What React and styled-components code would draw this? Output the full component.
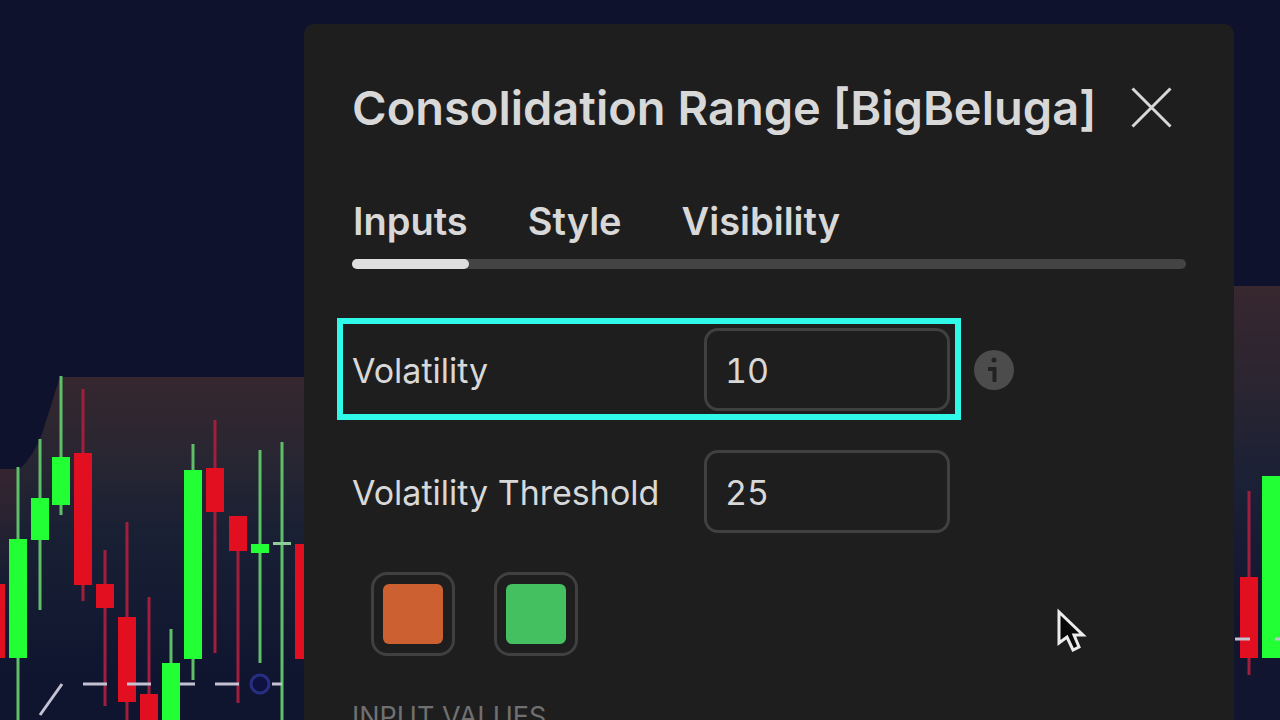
import React, { useState } from 'react'
import styled, { createGlobalStyle } from 'styled-components';


const GlobalStyle = createGlobalStyle`
    * {
        box-sizing: border-box;
    }
    body {
        margin: 0;
        background-color: #0f122d;
        font-family: Inter, "Liberation Sans", sans-serif;
    }
    button, input {
        font-family: inherit;
        color: inherit;
    }
`;

const Stage = styled.main`
    position: relative;
    height: 100vh;
    padding: 24px 46px 0 304px;
    overflow: hidden;
    color: #d8d8d8;
`;

const ChartSvg = styled.svg`
    position: absolute;
    top: 0;
    left: 0;
    width: 100%;
    height: 100%;
`;

const Dialog = styled.section`
    position: relative;
    min-height: 100%;
    padding: 48px 48px 0;
    border-radius: 10px 10px 0 0;
    background-color: #1e1e1e;
`;

const Header = styled.header`
    display: flex;
    align-items: center;
    justify-content: space-between;
    height: 72px;
    padding-right: 14px;
`;

const Title = styled.h1`
    margin: 0;
    font-size: 47px;
    font-weight: 600;
    line-height: 72px;
    white-space: nowrap;
`;

const CloseButton = styled.button`
    display: flex;
    padding: 0 0 2px;
    border: none;
    background: none;
    cursor: pointer;
`;

const Tabs = styled.div`
    position: relative;
    display: flex;
    gap: 58px;
    margin-top: 40px;
    padding-bottom: 10px;

    &::before {
        content: "";
        position: absolute;
        left: 0;
        bottom: 0;
        width: 100%;
        height: 10px;
        border-radius: 5px;
        background-color: #444444;
    }
`;

const Tab = styled.button`
    position: relative;
    height: 75px;
    padding: 0 1px 2px;
    border: none;
    background: none;
    font-size: 38px;
    font-weight: 600;
    line-height: 72px;
    cursor: pointer;

    &::after {
        content: "";
        display: ${({ $active }) => ($active ? 'block' : 'none')};
        position: absolute;
        left: 0;
        bottom: -10px;
        width: 100%;
        height: 10px;
        border-radius: 5px;
        background-color: #dedede;
    }
`;

const Form = styled.form`
    display: flex;
    flex-direction: column;
    gap: 39px;
    padding-top: 59px;
`;

const Field = styled.div`
    position: relative;
    display: flex;
    align-items: center;
    align-self: flex-start;
`;

const Label = styled.label`
    width: 352px;
    padding-top: 2px;
    font-size: 34px;
    line-height: 44px;
    white-space: nowrap;
`;

const NumberInput = styled.input`
    width: 246px;
    height: 83px;
    padding: 2px 18px 0;
    border: 3px solid #404040;
    border-radius: 14px;
    background: none;
    font-size: 34px;
    font-variant-numeric: tabular-nums;
    outline: none;
`;

const InfoButton = styled.button`
    display: flex;
    margin-left: 24px;
    padding: 0;
    border: none;
    background: none;
`;

const Highlight = styled.span`
    position: absolute;
    top: -10px;
    bottom: -9px;
    left: -15px;
    width: 624px;
    border: 6px solid #2ffaea;
    pointer-events: none;
`;

const Swatches = styled.div`
    display: flex;
    gap: 39px;
    padding-left: 19px;
`;

const Swatch = styled.button`
    width: 84px;
    height: 84px;
    padding: 9px;
    border: 3px solid #404040;
    border-radius: 16px;
    background: none;
    cursor: pointer;

    &::before {
        content: "";
        display: block;
        height: 100%;
        border-radius: 6px;
        background-color: ${({ $color }) => $color};
    }
`;

const SectionTitle = styled.h2`
    margin: 4px 0 0;
    color: #707070;
    font-size: 27px;
    font-weight: 400;
    line-height: 36px;
`;

const Pointer = styled.svg`
    position: absolute;
    top: 606px;
    left: 1054px;
`;


const GREEN = { body: '#22ff35', wick: '#5fbf68' };
const RED = { body: '#e20f20', wick: '#a01f3c' };

// x centre, wick top, wick bottom, body top, body bottom
const candles = [
    { x: -4, high: 584, low: 658, top: 584, bottom: 658, color: RED },
    { x: 18, high: 467, low: 730, top: 539, bottom: 658, color: GREEN },
    { x: 40, high: 439, low: 610, top: 498, bottom: 540, color: GREEN },
    { x: 61, high: 376, low: 515, top: 457, bottom: 505, color: GREEN },
    { x: 83, high: 389, low: 601, top: 453, bottom: 585, color: RED },
    { x: 105, high: 550, low: 706, top: 584, bottom: 608, color: RED },
    { x: 127, high: 522, low: 730, top: 617, bottom: 702, color: RED },
    { x: 149, high: 597, low: 730, top: 694, bottom: 730, color: RED },
    { x: 171, high: 629, low: 730, top: 663, bottom: 730, color: GREEN },
    { x: 193, high: 444, low: 680, top: 470, bottom: 659, color: GREEN },
    { x: 215, high: 420, low: 653, top: 468, bottom: 512, color: RED },
    { x: 238, high: 516, low: 703, top: 516, bottom: 551, color: RED },
    { x: 260, high: 450, low: 663, top: 544, bottom: 553, color: GREEN },
    { x: 282, high: 442, low: 730, top: 542, bottom: 545, color: { body: '#8fce98', wick: '#5fbf68' } },
    { x: 304, high: 544, low: 659, top: 544, bottom: 659, color: RED },
    { x: 1249, high: 491, low: 675, top: 577, bottom: 658, color: RED },
    { x: 1271, high: 476, low: 658, top: 476, bottom: 658, color: GREEN },
];

const Candle = ({ x, high, low, top, bottom, color }) => (
    <g>
        <rect x={x - 1.5} y={high} width="3" height={low - high} fill={color.wick} />
        <rect x={x - 9} y={top} width="18" height={bottom - top} fill={color.body} />
    </g>
)

const Chart = () => {
  return (
    <ChartSvg viewBox="0 0 1280 720" preserveAspectRatio="xMinYMin slice" aria-hidden="true">
        <defs>
            <linearGradient id="zone" x1="0" y1="377" x2="0" y2="690" gradientUnits="userSpaceOnUse">
                <stop offset="0" stopColor="#36272f" />
                <stop offset="0.25" stopColor="#292632" />
                <stop offset="0.5" stopColor="#192034" />
                <stop offset="1" stopColor="#0f142f" />
            </linearGradient>
            <linearGradient id="zoneRight" x1="0" y1="286" x2="0" y2="620" gradientUnits="userSpaceOnUse">
                <stop offset="0" stopColor="#38272f" />
                <stop offset="0.3" stopColor="#2a2531" />
                <stop offset="0.6" stopColor="#1a2036" />
                <stop offset="1" stopColor="#12152f" />
            </linearGradient>
            <linearGradient id="zoneEdge" x1="0" y1="0" x2="0" y2="1">
                <stop offset="0" stopColor="#38242f" stopOpacity="0.8" />
                <stop offset="1" stopColor="#38242f" stopOpacity="0" />
            </linearGradient>
        </defs>
        <path d="M0 469H20Q34 455 42 434L60 377H310V720H0Z" fill="url(#zone)" />
        <rect y="469" width="18" height="110" fill="url(#zoneEdge)" />
        <rect x="1230" y="286" width="50" height="434" fill="url(#zoneRight)" />
        {candles.map((candle) => <Candle key={candle.x} {...candle} />)}
        <path d="M40 715L62 684M83 684H107M127 684H151M180 684H195M215 684H239M272 684H282M1235 639H1250M1275 639H1280" fill="none" stroke="#c3c1d2" strokeWidth="3" />
        <circle cx="260" cy="684" r="9" fill="#0e1240" stroke="#292f80" strokeWidth="3" />
    </ChartSvg>
  )
}

const tabs = ['Inputs', 'Style', 'Visibility'];

const App = () => {
  const [active, setActive] = useState('Inputs');

  return (
    <Stage>
        <GlobalStyle />
        <Chart />
        <Dialog role="dialog" aria-labelledby="dialog-title">
            <Header>
                <Title id="dialog-title">Consolidation Range [BigBeluga]</Title>
                <CloseButton type="button" aria-label="Close">
                    <svg width="41" height="41" viewBox="0 0 41 41" fill="none" stroke="currentColor" strokeWidth="3">
                        <path d="M1.5 1.5L39.5 39.5M39.5 1.5L1.5 39.5" />
                    </svg>
                </CloseButton>
            </Header>
            <Tabs role="tablist">
                {tabs.map((name) => (
                    <Tab key={name} type="button" role="tab" aria-selected={active === name} $active={active === name} onClick={() => setActive(name)}>{name}</Tab>
                ))}
            </Tabs>
            <Form>
                <Field>
                    <Label htmlFor="volatility">Volatility</Label>
                    <NumberInput id="volatility" type="text" inputMode="numeric" defaultValue="10" />
                    <InfoButton type="button" aria-label="About volatility">
                        <svg width="40" height="40" viewBox="0 0 40 40">
                            <circle cx="20" cy="20" r="20" fill="#4c4c4c" />
                            <circle cx="20" cy="10" r="2.5" fill="#222222" />
                            <path d="M14 19H20.5V32" fill="none" stroke="#222222" strokeWidth="4" />
                        </svg>
                    </InfoButton>
                    <Highlight />
                </Field>
                <Field>
                    <Label htmlFor="threshold">Volatility Threshold</Label>
                    <NumberInput id="threshold" type="text" inputMode="numeric" defaultValue="25" />
                </Field>
                <Swatches>
                    <Swatch type="button" aria-label="Upper colour" $color="#cd6030" />
                    <Swatch type="button" aria-label="Lower colour" $color="#45c061" />
                </Swatches>
                <SectionTitle>INPUT VALUES</SectionTitle>
            </Form>
        </Dialog>
        <Pointer width="36" height="50" viewBox="0 0 36 50" aria-hidden="true">
            <path d="M5 6V37L13 31L19 44L25 41L20 29H29Z" fill="#080808" stroke="#ececec" strokeWidth="3" />
        </Pointer>
    </Stage>
  )
}

export default App
